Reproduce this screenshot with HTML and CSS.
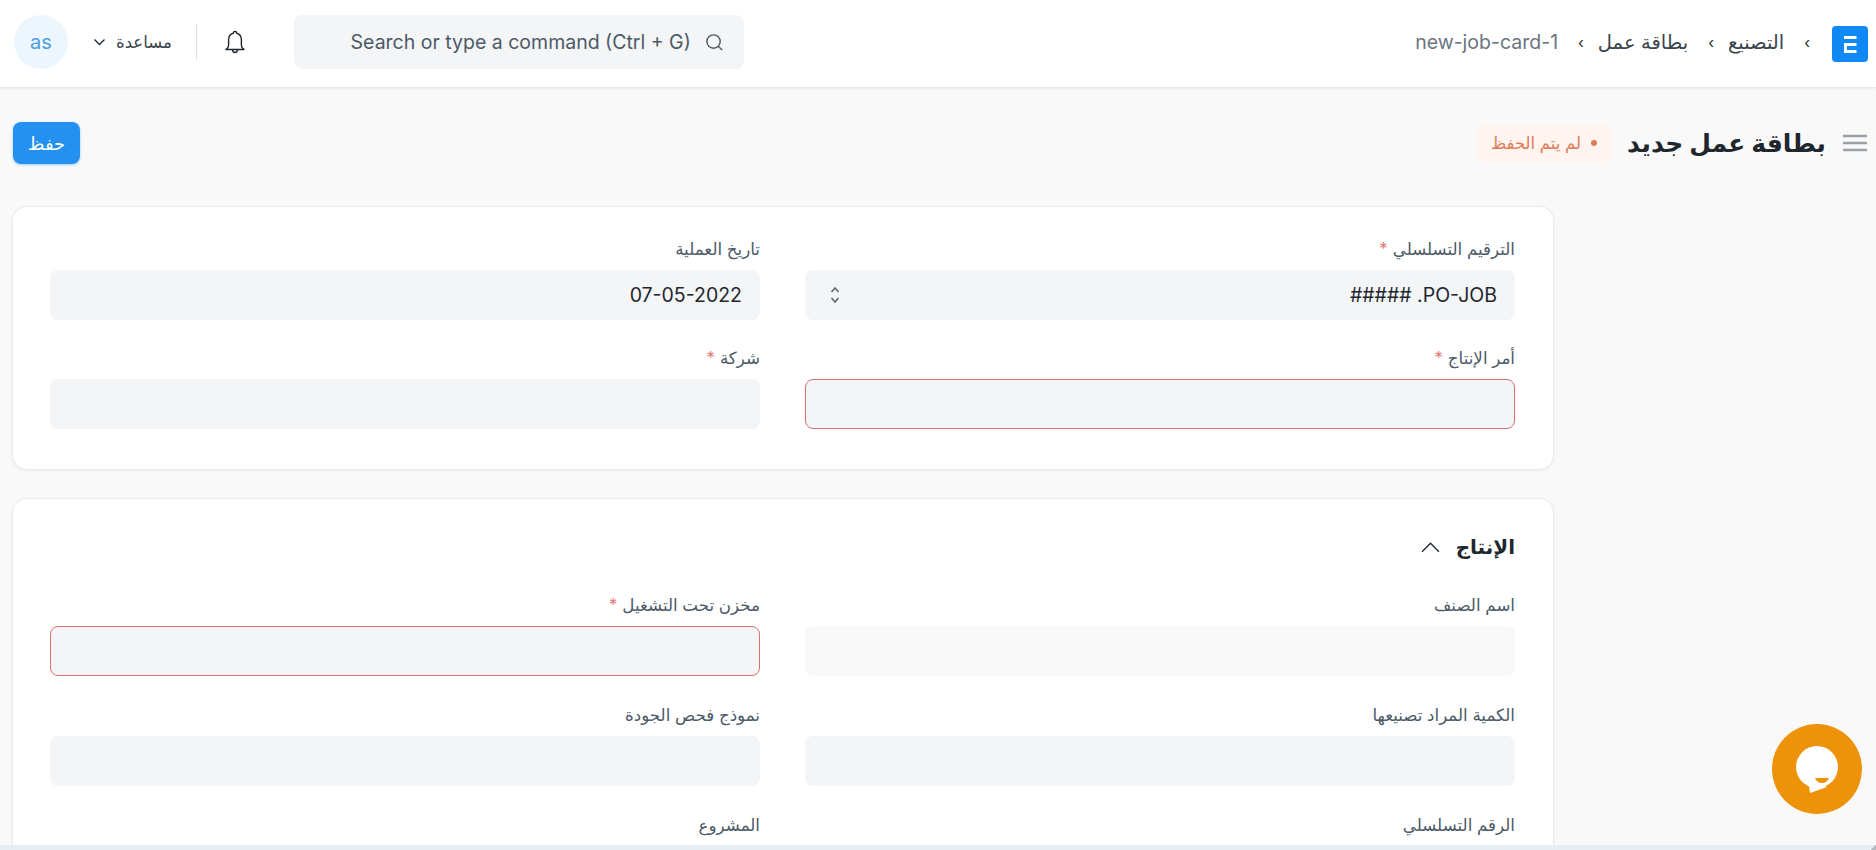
FILE: index.html
```html
<!DOCTYPE html>
<html lang="ar" dir="rtl">
<head>
<meta charset="utf-8">
<title>بطاقة عمل جديد</title>
<link rel="stylesheet" href="styles.css">
</head>
<body>
<header class="navbar">
  <div class="crumbs">
    <svg class="logo" viewBox="0 0 36 36"><rect width="36" height="36" rx="4" fill="#1089f5"/><path d="M12 10h12.500v3H12zM12 17h12.500v3H15v4h9.500v3H12z" fill="#fff"/></svg>
    <span class="sep">›</span>
    <span class="crumb">التصنيع</span>
    <span class="sep">›</span>
    <span class="crumb">بطاقة عمل</span>
    <span class="sep">›</span>
    <span class="crumb current">new-job-card-1</span>
  </div>
  <div class="nav-tools">
    <div class="search">
      <svg class="search-icon" viewBox="0 0 20 20"><circle cx="9" cy="9" r="7" fill="none" stroke="#4c5a67" stroke-width="1.500"/><path d="M14 14l4 4" stroke="#4c5a67" stroke-width="1.500" fill="none"/></svg>
      <span dir="ltr">Search or type a command (Ctrl + G)</span>
    </div>
    <svg class="bell" viewBox="0 0 24 26"><path d="M12 2.500c-1 0-1.700.7-1.700 1.700C7.200 5 5.600 7.600 5.600 11v5.500c0 1.600-1.300 3-2.600 4h18c-1.300-1-2.600-2.400-2.600-4V11c0-3.400-1.600-6-4.700-6.800 0-1-.7-1.700-1.700-1.700zM9.500 20.500c0 1.800 1.100 3 2.500 3s2.500-1.200 2.500-3" fill="none" stroke="#1f272e" stroke-width="1.400" stroke-linejoin="round"/></svg>
    <span class="divider"></span>
    <div class="help">
      <span>مساعدة</span>
      <svg class="help-caret" viewBox="0 0 12 8"><path d="M1 1.500l5 5 5-5" fill="none" stroke="#1f272e" stroke-width="1.300"/></svg>
    </div>
    <div class="avatar">as</div>
  </div>
</header>

<div class="viewport">
  <main class="page">
    <div class="page-head">
      <div class="title-group">
        <svg class="menu-icon" viewBox="0 0 24 18"><path d="M0 2h24M0 9h24M0 16h24" stroke="#9aa1a9" stroke-width="2.600"/></svg>
        <h1 class="title">بطاقة عمل جديد</h1>
        <span class="pill"><span class="dot"></span>لم يتم الحفظ</span>
      </div>
      <button class="save" type="button">حفظ</button>
    </div>

    <section class="card card-plain">
      <div class="grid">
        <div class="field">
          <label class="label">الترقيم التسلسلي <span class="req">*</span></label>
          <div class="input select"><span>PO-JOB. #####</span>
            <svg class="updown" viewBox="0 0 10 20"><path d="M1.500 7L5 3l3.500 4M1.500 13L5 17l3.500-4" fill="none" stroke="#5f6770" stroke-width="1.600"/></svg>
          </div>
        </div>
        <div class="field">
          <label class="label">تاريخ العملية</label>
          <div class="input"><bdi>07-05-2022</bdi></div>
        </div>
        <div class="field">
          <label class="label">أمر الإنتاج <span class="req">*</span></label>
          <div class="input invalid"></div>
        </div>
        <div class="field">
          <label class="label">شركة <span class="req">*</span></label>
          <div class="input"></div>
        </div>
      </div>
    </section>

    <section class="card card-section">
      <div class="section-head">
        <h2 class="section-title">الإنتاج</h2>
        <svg class="section-caret" viewBox="0 0 18 10"><path d="M1 9l8-8 8 8" fill="none" stroke="#1f272e" stroke-width="1.300"/></svg>
      </div>
      <div class="grid grid-loose">
        <div class="field">
          <label class="label">اسم الصنف</label>
          <div class="input readonly"></div>
        </div>
        <div class="field">
          <label class="label">مخزن تحت التشغيل <span class="req">*</span></label>
          <div class="input invalid"></div>
        </div>
        <div class="field">
          <label class="label">الكمية المراد تصنيعها</label>
          <div class="input"></div>
        </div>
        <div class="field">
          <label class="label">نموذج فحص الجودة</label>
          <div class="input"></div>
        </div>
        <div class="field">
          <label class="label">الرقم التسلسلي</label>
          <div class="input"></div>
        </div>
        <div class="field">
          <label class="label">المشروع</label>
          <div class="input"></div>
        </div>
      </div>
    </section>
  </main>
  <button class="chat" type="button" aria-label="chat">
    <svg viewBox="0 0 90 90"><circle cx="45" cy="43" r="21" fill="#fff"/><path d="M36 56l2 13 17-6z" fill="#fff"/><path d="M43 54h14c-1 3-4 5-7 5s-6-2-7-5z" fill="#ee9209"/></svg>
  </button>
</div>
<div class="hbar"></div>
</body>
</html>
```

FILE: styles.css
```css
* { box-sizing: border-box; }
html, body { height: 100%; }
body {
  margin: 0;
  height: 100vh;
  overflow: hidden;
  display: flex;
  flex-direction: column;
  background: #f9f9fa;
  color: #1f272e;
  font-family: Inter, "Noto Sans", "DejaVu Sans", sans-serif;
  font-size: 17px;
}
.navbar {
  flex: none;
  height: 87px;
  background: #fff;
  box-shadow: 0 1px 3px rgba(25, 39, 52, .12);
  display: flex;
  align-items: center;
  justify-content: space-between;
  padding: 0 8px 3px 14px;
  position: relative;
  z-index: 2;
}
.crumbs { display: flex; align-items: center; font-size: 19.500px; }
.logo { width: 36px; height: 36px; margin: 4px 0 0 22px; }
.sep { margin-left: 20px; font-size: 15px; color: #1f272e; }
.crumb { margin-left: 14px; color: #3a444d; }
.current { color: #6b7480; margin-left: 0; }
.nav-tools { display: flex; align-items: center; }
.search {
  width: 450px;
  height: 54px;
  border-radius: 8px;
  background: #f4f5f6;
  display: flex;
  align-items: center;
  padding: 0 20px;
  gap: 14px;
  font-size: 19.500px;
  color: #4c5a67;
  margin-left: 47px;
}
.search-icon { width: 19px; height: 19px; }
.bell { width: 24px; height: 26px; margin-left: 26px; }
.divider { width: 1px; height: 36px; background: #dde0e3; margin-left: 24px; }
.help { display: flex; align-items: center; gap: 10px; font-size: 16.500px; color: #3a444d; margin-left: 25px; }
.help-caret { width: 13px; height: 8px; }
.avatar {
  width: 54px;
  height: 54px;
  border-radius: 50%;
  background: #eef6fd;
  color: #4c9ee3;
  display: flex;
  align-items: center;
  justify-content: center;
  font-size: 20px;
}
.viewport { flex: 1; min-height: 0; overflow: hidden; position: relative; }
.page { width: 1540px; margin-right: 323px; }
.page-head {
  height: 120px;
  display: flex;
  align-items: center;
  justify-content: space-between;
  margin-right: -314px;
  padding: 0 0 8px 0;
}
.title-group { display: flex; align-items: center; }
.menu-icon { width: 24px; height: 18px; margin-left: 17px; }
.title { margin: 0 0 0 14px; font-size: 25px; font-weight: 700; }
.pill {
  height: 37px;
  padding: 0 16px 0 14px;
  border-radius: 8px;
  background: #fff4f0;
  color: #e07a55;
  font-size: 16.500px;
  display: flex;
  align-items: center;
  gap: 10px;
}
.dot { width: 6px; height: 6px; border-radius: 50%; background: #e07a55; }
.save {
  width: 67px;
  height: 42px;
  border: 0;
  border-radius: 8px;
  background: #2490ef;
  color: #fff;
  font: inherit;
  font-size: 18px;
  font-weight: 400;
  box-shadow: 0 1px 3px rgba(36, 144, 239, .4);
}
.card {
  background: #fff;
  border-radius: 14px;
  box-shadow: 0 0 0 1px rgba(25, 39, 52, .04), 0 1px 4px rgba(25, 39, 52, .08);
  padding: 0 38px;
}
.card-plain { height: 262px; padding-top: 24px; margin-bottom: 30px; }
.card-section { padding-top: 28px; padding-bottom: 40px; }
.section-head { height: 40px; display: flex; align-items: center; gap: 16px; margin-bottom: 20px; }
.section-title { margin: 0; font-size: 20px; font-weight: 700; }
.section-caret { width: 19px; height: 11px; }
.grid { display: grid; grid-template-columns: 710px 710px; column-gap: 45px; row-gap: 20px; }
.grid-loose { row-gap: 21px; }
.field { display: flex; flex-direction: column; }
.label { height: 30px; margin-bottom: 9px; padding-top: 5px; display: flex; align-items: center; gap: 5px; font-size: 16.700px; color: #4c5a67; }
.req { color: #e07b7b; }
.input {
  height: 50px;
  border-radius: 8px;
  background: #f4f5f6;
  display: flex;
  align-items: center;
  justify-content: space-between;
  padding: 0 18px;
  font-size: 19.500px;
  color: #1f272e;
}
.readonly { background: #f9f9fa; }
.invalid { border: 1px solid #d9726f; }
.updown { width: 10px; height: 20px; margin-left: 7px; }
.chat {
  position: absolute;
  left: 1772px;
  top: 637px;
  width: 90px;
  height: 90px;
  border: 0;
  padding: 0;
  border-radius: 50%;
  background: #ee9209;
}
.chat svg { display: block; width: 90px; height: 90px; }
.hbar {
  flex: none;
  height: 5px;
  background: linear-gradient(to top left, #b4bac0 50%, transparent 50%) right bottom / 6px 5px no-repeat, #e8edf2;
}
```
